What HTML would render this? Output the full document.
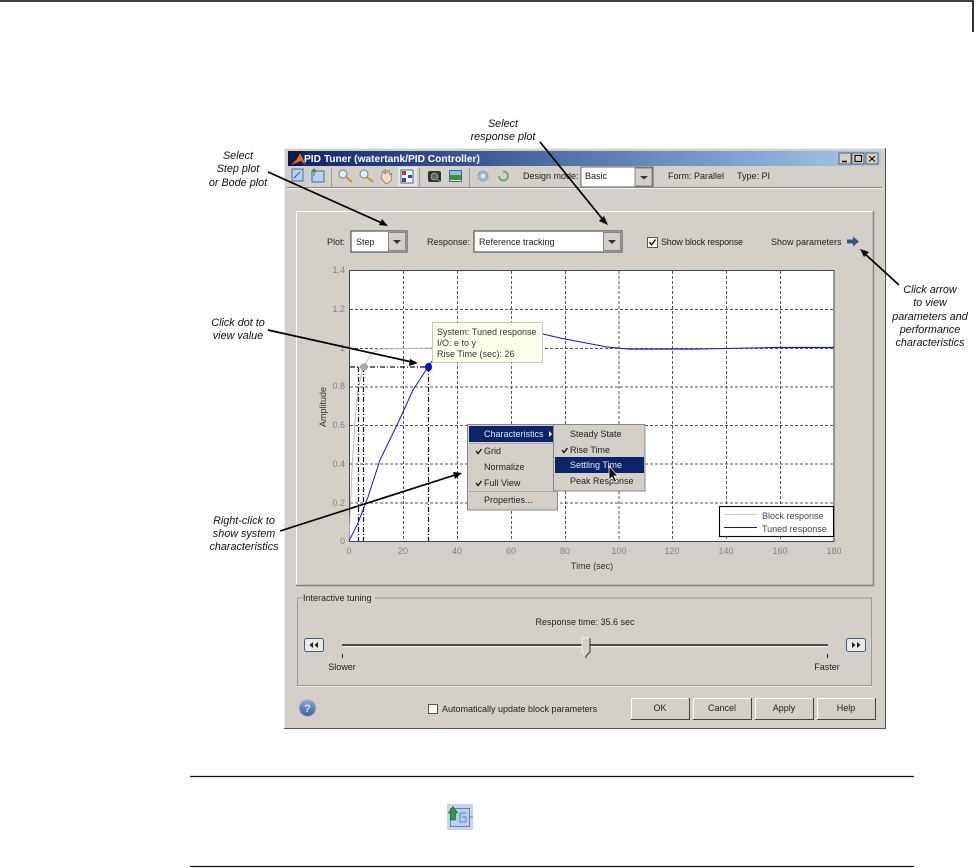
<!DOCTYPE html>
<html><head><meta charset="utf-8"><title>PID Tuner</title>
<style>
html,body{margin:0;padding:0;background:#fff;width:976px;height:868px;overflow:hidden}
svg{display:block;position:absolute;left:0;top:0}
text{font-family:"Liberation Sans",sans-serif;font-size:9px;fill:#222}
.a text{font-style:italic;font-size:10.8px;text-anchor:middle;fill:#111}
.t text{fill:#808080;font-size:9px}
.e{text-anchor:end}
.m{text-anchor:middle}
.g{stroke:#555;stroke-width:1;stroke-dasharray:3 2;fill:none}
.d{stroke:#111;stroke-width:1.2;stroke-dasharray:5 2 1 2;fill:none}
.ar{stroke:#000;stroke-width:1.7;fill:none}
</style></head><body>
<svg width="976" height="868" viewBox="0 0 976 868" xmlns="http://www.w3.org/2000/svg">
<defs>
<linearGradient id="tb" x1="0" x2="1" y1="0" y2="0"><stop offset="0" stop-color="#0a246a"/><stop offset="1" stop-color="#a6caf0"/></linearGradient>
<linearGradient id="ball" x1="0" x2="0" y1="0" y2="1"><stop offset="0" stop-color="#8fa8d8"/><stop offset="1" stop-color="#3c5fa8"/></linearGradient>
</defs>
<!-- page frame -->
<path d="M0 1H973V32" fill="none" stroke="#000" stroke-width="1.6"/>
<path d="M190 776.5H914M190 866.5H914" stroke="#111" stroke-width="1.2"/>
<!-- window -->
<rect x="284" y="148" width="601.5" height="580.5" fill="#d4d0c8"/>
<path d="M284.5 728V148.5H885" stroke="#eeece6" fill="none"/>
<path d="M284 728.5H885.5V148" stroke="#555" fill="none"/>
<rect x="288" y="151" width="593" height="15" fill="url(#tb)"/>
<rect x="288" y="151" width="14" height="15" fill="#0a1a4a"/>
<path d="M291 165L297 159L300 153L303 159L306 165L301 161Z" fill="#e8681c"/>
<text x="304" y="162" style="font-size:10.2px;font-weight:bold;fill:#fff">PID Tuner (watertank/PID Controller)</text>
<g fill="#d4d0c8" stroke="#333" stroke-width=".7">
<rect x="839" y="153" width="12" height="11"/><rect x="852" y="153" width="12" height="11"/><rect x="866" y="153" width="12" height="11"/></g>
<path d="M842 161.5H847" stroke="#000" stroke-width="1.6"/><rect x="855" y="155.5" width="6.5" height="6" fill="none" stroke="#000" stroke-width="1.1"/><path d="M869 156L875 161.5M875 156L869 161.5" stroke="#000" stroke-width="1.1"/>
<!-- toolbar icons -->
<rect x="292" y="169" width="11" height="12" fill="#b6d2f0" stroke="#3c6fa8"/><path d="M294 178L300 172" stroke="#25588f"/>
<rect x="312" y="171" width="12" height="11" fill="#b6d2f0" stroke="#3c6fa8"/><path d="M314 176V170M311.500 172L314 169L316.500 172" stroke="#1e8a3a" fill="#4aa84a"/>
<path d="M331.500 168V187M419.500 168V187M469.500 168V187" stroke="#999"/>
<circle cx="343" cy="174" r="4" fill="#dfeefa" stroke="#5a86b8"/><path d="M346 177L352 182" stroke="#c8912c" stroke-width="2"/>
<circle cx="364" cy="174" r="4" fill="#dfeefa" stroke="#5a86b8"/><path d="M367 177L373 182" stroke="#c8912c" stroke-width="2"/>
<path d="M381 178L383 171L385 174V169L387 173L389 170L390 175L392 173L391 181L386 184Z" fill="#f6dcb8" stroke="#666" stroke-width=".6"/>
<rect x="398" y="167" width="19" height="19" fill="#e8e6e0"/>
<rect x="401" y="170" width="12" height="13" fill="#fff" stroke="#4060a0"/><rect x="402" y="171" width="4" height="4" fill="#d03030"/><rect x="402" y="178" width="4" height="4" fill="#2850b0"/><rect x="408" y="175" width="4" height="3" fill="#2850b0"/>
<rect x="428" y="171" width="13" height="11" rx="2" fill="#333"/><circle cx="434.500" cy="176.500" r="3.500" fill="#666" stroke="#ccc" stroke-width=".6"/><path d="M436 178l4 4" stroke="#3a3" stroke-width="1.500"/>
<rect x="449.500" y="170.500" width="12" height="11" fill="#f0f0f0" stroke="#4060a0"/><rect x="450" y="175" width="11" height="5" fill="#2f9a3c"/><rect x="450" y="171" width="11" height="4" fill="#8ac0e8"/>
<circle cx="483" cy="176" r="5" fill="#a8b8d8" stroke="#7a8cb0" stroke-dasharray="2 1"/><circle cx="483" cy="176" r="2" fill="#e4e8f0"/>
<path d="M499 176A4.500 4.500 0 1 0 503 171.500" fill="none" stroke="#5cb85c" stroke-width="2"/>
<text x="523" y="179">Design mode:</text>
<rect x="581" y="167" width="72" height="20" fill="#fff" stroke="#666"/>
<rect x="635" y="168" width="17" height="18" fill="#d4d0c8" stroke="#888"/><path d="M640 176H648L644 179.500Z" fill="#333"/>
<text x="585" y="179">Basic</text>
<text x="668" y="179">Form: Parallel</text><text x="737" y="179">Type: PI</text>
<path d="M287 187.500H882" stroke="#888"/><path d="M287 188.500H882" stroke="#f4f4f0"/>
<!-- main panel -->
<path d="M296.500 585V211.500H873" stroke="#fff" fill="none"/>
<path d="M296 585.500H873.500V211" stroke="#808080" stroke-width="1.400" fill="none"/>
<text x="327" y="245">Plot:</text>
<rect x="351" y="231" width="56" height="21" fill="#fff" stroke="#555" stroke-width="1.200"/>
<rect x="388.500" y="232.500" width="17" height="18" fill="#d4d0c8" stroke="#888"/><path d="M393 240H401L397 244Z" fill="#333"/>
<text x="356" y="245">Step</text>
<text x="427" y="245">Response:</text>
<rect x="474" y="231" width="148" height="21" fill="#fff" stroke="#555" stroke-width="1.200"/>
<rect x="603.500" y="232.500" width="17" height="18" fill="#d4d0c8" stroke="#888"/><path d="M608 240H616L612 244Z" fill="#333"/>
<text x="479" y="245">Reference tracking</text>
<rect x="647.500" y="237.500" width="10" height="10" fill="#fff" stroke="#555"/><path d="M649.500 242L651.500 245L655.500 239.500" stroke="#000" stroke-width="1.300" fill="none"/>
<text x="661" y="245" textLength="82">Show block response</text>
<text x="771" y="245">Show parameters</text>
<path d="M847 239.500H853V236.500L859 241.500L853 246.500V243.500H847Z" fill="#2f5597"/>
<!-- axes -->
<rect x="349.500" y="270.500" width="484.500" height="271" fill="#fff" stroke="#444"/>
<g class="g">
<path d="M403.500 271V541M457.500 271V541M511.500 271V541M565.500 271V541M619 271V541M672.500 271V541M726.500 271V541M780.500 271V541"/>
<path d="M350 309.500H834M350 348.500H834M350 387H834M350 425.500H834M350 464H834M350 503H834"/>
</g>
<g class="t">
<text class="e" x="345" y="273">1.4</text><text class="e" x="345" y="312">1.2</text><text class="e" x="345" y="351">1</text><text class="e" x="345" y="389">0.8</text><text class="e" x="345" y="428">0.6</text><text class="e" x="345" y="467">0.4</text><text class="e" x="345" y="506">0.2</text><text class="e" x="345" y="544">0</text>
<text class="m" x="349" y="554">0</text><text class="m" x="403" y="554">20</text><text class="m" x="457" y="554">40</text><text class="m" x="511" y="554">60</text><text class="m" x="565" y="554">80</text><text class="m" x="619" y="554">100</text><text class="m" x="672" y="554">120</text><text class="m" x="726" y="554">140</text><text class="m" x="780" y="554">160</text><text class="m" x="834" y="554">180</text>
</g>
<text x="592" y="569" class="m" style="fill:#333">Time (sec)</text>
<text transform="translate(326 407) rotate(-90)" class="m" style="fill:#333">Amplitude</text>
<path d="M349 541L352 470L355 420L358 390L363 367L372 353L380 349L432 348" fill="none" stroke="#bbb"/>
<path d="M349 541L358 523L368 497L380 460L398 423L413 390L428 367L440 350L470 328L510 328L543 334L560 338L607 347L628 349L700 349L773 347.500L834 347.500" fill="none" stroke="#1414e0"/>
<path d="M628 349H700M773 347.500H834" stroke="#1414e0" stroke-width="1.300"/>
<path class="d" d="M350 367H428M358.500 367V541M363.500 367V541M428.500 367V541"/>
<circle cx="364" cy="367" r="3.800" fill="#aaa"/>
<ellipse cx="428.500" cy="367" rx="3.500" ry="4.300" fill="#0a0ae8"/>
<!-- tooltip -->
<rect x="432.500" y="322.500" width="110" height="40" fill="#ffffee" stroke="#c8c8b0"/>
<text x="437" y="335" style="fill:#333">System: Tuned response</text>
<text x="437" y="346" style="fill:#333">I/O: e to y</text>
<text x="437" y="357" style="fill:#333">Rise Time (sec): 26</text>
<!-- legend -->
<rect x="719.500" y="506.500" width="114" height="30" fill="#fff" stroke="#000" stroke-width="1.100"/>
<path d="M724 514.500H757" stroke="#ccc"/><path d="M724 527.500H757" stroke="#1010c0"/>
<text x="762" y="519" style="fill:#444">Block response</text><text x="762" y="532" style="fill:#444">Tuned response</text>
<!-- context menu -->
<rect x="467.500" y="424.500" width="90" height="85.500" fill="#d4d0c8" stroke="#888"/>
<rect x="469" y="426" width="84" height="16" fill="#0a246a"/>
<text x="484" y="437" style="fill:#e8e8f0">Characteristics</text><path d="M549 431V437L552 434Z" fill="#fff"/>
<path d="M469 443.500H556" stroke="#aaa"/><path d="M469 491.500H556" stroke="#aaa"/>
<text x="484" y="454">Grid</text><text x="484" y="470">Normalize</text><text x="484" y="486">Full View</text><text x="484" y="503">Properties...</text>
<path d="M476 451L478 453.500L481.500 449M476 483L478 485.500L481.500 481" stroke="#111" stroke-width="1.400" fill="none"/>
<rect x="553.500" y="424.500" width="91.500" height="66.500" fill="#d4d0c8" stroke="#888"/>
<rect x="555" y="457" width="89" height="16" fill="#0a246a"/>
<text x="570" y="437">Steady State</text><text x="570" y="453">Rise Time</text><text x="570" y="468" style="fill:#e8e8f0">Settling Time</text><text x="570" y="484">Peak Response</text>
<path d="M562 450L564 452.500L567.500 448" stroke="#111" stroke-width="1.400" fill="none"/>
<path d="M609 466V480L612 477L614.500 482L616.500 481L614 476H618Z" fill="#111" stroke="#fff" stroke-width=".7"/>
<!-- tuning group -->
<path d="M303 598H297.500V685.500H871.500V598H375" fill="none" stroke="#999"/>
<path d="M298 686.500H872.500" stroke="#eee"/>
<text x="303" y="601">Interactive tuning</text>
<text x="585" y="625" class="m">Response time: 35.6 sec</text>
<rect x="304.500" y="638.500" width="19" height="13" rx="2" fill="#ece9e0" stroke="#3c5f8f"/><path d="M313 642V648L309.500 645ZM318 642V648L314.500 645Z" fill="#222"/>
<rect x="846.500" y="638.500" width="19" height="13" rx="2" fill="#ece9e0" stroke="#3c5f8f"/><path d="M852 642V648L855.500 645ZM857 642V648L860.500 645Z" fill="#222"/>
<path d="M342 645H828" stroke="#222" stroke-width="1.500"/><path d="M342 646.800H828" stroke="#f6f6f2"/>
<path d="M582 638H590V652L586 656L582 652Z" fill="#d4d0c8" stroke="#fff" stroke-width=".7"/><path d="M590 638V652L586 656V658" fill="none" stroke="#333"/>
<path d="M342.500 654V658M827.500 654V658" stroke="#222"/>
<text x="342" y="670" class="m">Slower</text><text x="827" y="670" class="m">Faster</text>
<!-- bottom -->
<circle cx="307.500" cy="708" r="8.500" fill="url(#ball)" stroke="#b8b8c0"/>
<text x="307.500" y="712" class="m" style="font-weight:bold;font-size:11px;fill:#dfe6f5">?</text>
<rect x="428.500" y="704.500" width="9" height="9" fill="#fff" stroke="#555"/>
<text x="442" y="712">Automatically update block parameters</text>
<g fill="#d4d0c8">
<path d="M631.500 719V698.500H689" stroke="#fff"/><path d="M631 719.500H689.500V698" stroke="#444"/>
<path d="M693.500 719V698.500H751" stroke="#fff"/><path d="M693 719.500H751.500V698" stroke="#444"/>
<path d="M755.500 719V698.500H813" stroke="#fff"/><path d="M755 719.500H813.500V698" stroke="#444"/>
<path d="M817.500 719V698.500H875" stroke="#fff"/><path d="M817 719.500H875.500V698" stroke="#444"/>
</g>
<text class="m" x="660" y="711">OK</text><text class="m" x="722" y="711">Cancel</text><text class="m" x="784" y="711">Apply</text><text class="m" x="846" y="711">Help</text>
<!-- annotation arrows -->
<g class="ar">
<path d="M268 172L384 224"/><path d="M540 142L604 221"/><path d="M899 285L864 253"/><path d="M268 330L412 362"/><path d="M280 531L455 475"/>
</g>
<g fill="#000">
<path d="M388 226L379 225L382 219Z"/><path d="M608 225L599 221L604 216Z"/><path d="M860 249L869 252L864 257Z"/><path d="M418 363L409 366L410 359Z"/><path d="M462 473L455 479L453 472Z"/>
</g>
<g class="a">
<text x="238" y="159">Select</text><text x="238" y="172">Step plot</text><text x="238" y="186">or Bode plot</text>
<text x="503" y="127">Select</text><text x="503" y="140">response plot</text>
<text x="238" y="326">Click dot to</text><text x="238" y="339">view value</text>
<text x="244" y="524">Right-click to</text><text x="244" y="537">show system</text><text x="244" y="550">characteristics</text>
<text x="930" y="293">Click arrow</text><text x="930" y="306">to view</text><text x="930" y="320">parameters and</text><text x="930" y="333">performance</text><text x="930" y="346">characteristics</text>
</g>
<!-- bottom icon -->
<rect x="447" y="804" width="26" height="26" fill="#c4d4ea"/>
<rect x="450.500" y="808.500" width="19" height="18" fill="#b6d2f0" stroke="#5a82b8"/>
<path d="M466 813H460V822H466V817H462" fill="none" stroke="#5a82b8"/>
<path d="M469 817H473" stroke="#5a82b8"/>
<path d="M448.500 813L453 806.500L457.500 813H455.500V820H450.500V813Z" fill="#2f9a3c" stroke="#0c5a20" stroke-width=".6"/>
</svg>
</body></html>
